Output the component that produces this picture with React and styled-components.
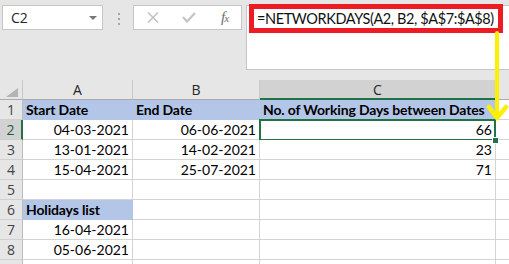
import styled, { createGlobalStyle } from 'styled-components';

const GlobalStyle = createGlobalStyle`
  html, body { margin: 0; padding: 0; background: #fff; }
  body { font-family: 'Lato', 'Liberation Sans', sans-serif; }
`;

const columns = [
  { key: 'A', width: 110 },
  { key: 'B', width: 127 },
  { key: 'C', width: 236, selected: true },
  { key: '', width: 20 },
];

const rows = [
  { n: 1, cells: [{ text: 'Start Date', bold: true, fill: true }, { text: 'End Date', bold: true, fill: true }, { text: 'No. of Working Days between Dates', bold: true, fill: true }, {}] },
  { n: 2, selected: true, cells: [{ text: '04-03-2021', right: true }, { text: '06-06-2021', right: true }, { text: '66', right: true, active: true }, {}] },
  { n: 3, cells: [{ text: '13-01-2021', right: true }, { text: '14-02-2021', right: true }, { text: '23', right: true }, {}] },
  { n: 4, cells: [{ text: '15-04-2021', right: true }, { text: '25-07-2021', right: true }, { text: '71', right: true }, {}] },
  { n: 5, cells: [{}, {}, {}, {}] },
  { n: 6, cells: [{ text: 'Holidays list', bold: true, fill: true }, {}, {}, {}] },
  { n: 7, cells: [{ text: '16-04-2021', right: true }, {}, {}, {}] },
  { n: 8, cells: [{ text: '05-06-2021', right: true }, {}, {}, {}] },
  { n: '', cells: [{}, {}, {}, {}] },
];

const App = () => {
  return (
    <Window>
      <GlobalStyle />
      <Toolbar>
        <NameBox>
          C2
          <Caret />
        </NameBox>
        <Grip>
          <Dot />
          <Dot />
          <Dot />
        </Grip>
        <ButtonsBox>
          <IconSlot>
            <svg width="12" height="11" viewBox="0 0 12 11">
              <path d="M1 0.5 L11 10.5 M11 0.5 L1 10.5" stroke="#c4c4c4" strokeWidth="1.6" fill="none" />
            </svg>
          </IconSlot>
          <IconSlot>
            <svg width="14" height="11" viewBox="0 0 14 11">
              <path d="M1 5 L5 9.5 L13 1" stroke="#c4c4c4" strokeWidth="2.2" fill="none" />
            </svg>
          </IconSlot>
          <IconSlot>
            <Fx>
              f<sub>x</sub>
            </Fx>
          </IconSlot>
        </ButtonsBox>
        <FormulaBar>
          <Highlight>
            <Formula>=NETWORKDAYS(A2, B2, $A$7:$A$8)</Formula>
          </Highlight>
        </FormulaBar>
      </Toolbar>

      <Sheet>
        <Corner />
        {columns.map((c, i) => (
          <ColHeader key={'c' + i} $selected={c.selected}>
            {c.key}
          </ColHeader>
        ))}
        {rows.map((r, ri) => [
          <RowHeader key={'h' + ri} $selected={r.selected}>
            {r.n}
          </RowHeader>,
          ...r.cells.map((cell, i) => (
            <Cell
              key={ri + '-' + i}
              $fill={cell.fill}
              $bold={cell.bold}
              $right={cell.right}
              $active={cell.active}
            >
              {cell.text}
              {cell.active && <FillHandle />}
            </Cell>
          )),
        ])}
      </Sheet>

      <Arrow width="24" height="92" viewBox="0 0 24 92">
        <path d="M11 3 L11 84" stroke="#ffef00" strokeWidth="4" strokeLinecap="round" fill="none" />
        <path d="M3 77 L11 88 L20 77" stroke="#ffef00" strokeWidth="4.5" strokeLinecap="round" strokeLinejoin="round" fill="none" />
      </Arrow>
    </Window>
  );
};

const Window = styled.div`
  position: relative;
  width: 509px;
  height: 264px;
  overflow: hidden;
  background: #fff;
`;

const Toolbar = styled.div`
  display: flex;
  align-items: flex-start;
  height: 80px;
  padding: 5px 0 0 2px;
  box-sizing: border-box;
  background: #e6e6e6;
`;

const NameBox = styled.div`
  flex-shrink: 0;
  display: flex;
  align-items: center;
  justify-content: space-between;
  width: 101px;
  height: 25px;
  box-sizing: border-box;
  padding: 0 5px 0 8px;
  background: #fff;
  border: 1px solid #c6c6c6;
  font: 14px 'Open Sans', sans-serif;
  color: #262626;
`;

const Caret = styled.span`
  width: 0;
  height: 0;
  border-left: 4px solid transparent;
  border-right: 4px solid transparent;
  border-top: 4px solid #777;
`;

const Grip = styled.div`
  flex-shrink: 0;
  display: flex;
  flex-direction: column;
  gap: 3px;
  margin: 8px 13px 0 15px;
`;

const Dot = styled.span`
  width: 2px;
  height: 2px;
  background: #a6a6a6;
`;

const ButtonsBox = styled.div`
  flex-shrink: 0;
  display: grid;
  grid-template-columns: repeat(3, 36px);
  align-items: center;
  width: 109px;
  height: 25px;
  box-sizing: border-box;
  padding-left: 1px;
  background: #fff;
  border: 1px solid #c6c6c6;
`;

const IconSlot = styled.span`
  display: flex;
  align-items: center;
  justify-content: center;
`;

const Fx = styled.span`
  font: italic 15px 'Liberation Serif', serif;
  color: #6e6e6e;
  line-height: 1;

  sub {
    font-size: 11px;
    vertical-align: 0;
    margin-left: -1px;
  }
`;

const FormulaBar = styled.div`
  flex: 1;
  min-width: 0;
  height: 65px;
  margin-left: 4px;
  box-sizing: border-box;
  padding: 0 6px 0 2px;
  background: #fff;
  border: 1px solid #c6c6c6;
  border-right: none;
`;

const Highlight = styled.div`
  display: flex;
  align-items: center;
  height: 29px;
  margin-top: -2px;
  box-sizing: border-box;
  padding-left: 3px;
  border: 5px solid #ed1c24;
  overflow: hidden;
`;

const Formula = styled.span`
  font: 14.5px 'Lato', sans-serif;
  letter-spacing: -0.4px;
  color: #111;
  white-space: nowrap;
`;

const Sheet = styled.div`
  display: grid;
  grid-template-columns: 23px ${columns.map((c) => c.width + 'px').join(' ')};
  grid-auto-rows: 20px;
`;

const Corner = styled.div`
  position: relative;
  background: #e6e6e6;
  border-right: 1px solid #c8c8c8;
  border-bottom: 1px solid #ababab;

  &::after {
    content: '';
    position: absolute;
    right: 4px;
    bottom: 2px;
    width: 12px;
    height: 9px;
    background: #b4b4b4;
    clip-path: polygon(100% 0, 100% 100%, 0 100%);
  }
`;

const ColHeader = styled.div`
  display: flex;
  align-items: center;
  justify-content: center;
  box-sizing: border-box;
  background: ${(p) => (p.$selected ? '#d2d2d2' : '#e6e6e6')};
  border-right: 1px solid #c8c8c8;
  border-bottom: ${(p) => (p.$selected ? '2px solid #217346' : '1px solid #ababab')};
  font: 14px 'Open Sans', sans-serif;
  color: #262626;
`;

const RowHeader = styled.div`
  display: flex;
  align-items: center;
  justify-content: center;
  box-sizing: border-box;
  background: ${(p) => (p.$selected ? '#d2d2d2' : '#e6e6e6')};
  border-right: ${(p) => (p.$selected ? '2px solid #217346' : '1px solid #bdbdbd')};
  border-bottom: 1px solid #d0d0d0;
  font: 14px 'Open Sans', sans-serif;
  color: ${(p) => (p.$selected ? '#1e5e3b' : '#444')};
`;

const Cell = styled.div`
  position: relative;
  display: flex;
  align-items: flex-end;
  justify-content: ${(p) => (p.$right ? 'flex-end' : 'flex-start')};
  box-sizing: border-box;
  padding: 0 3px 1px 3px;
  background: ${(p) => (p.$fill ? '#b4c6e7' : '#fff')};
  border-right: 1px solid ${(p) => (p.$fill ? '#b4c6e7' : '#d4d4d4')};
  border-bottom: 1px solid ${(p) => (p.$fill ? '#b4c6e7' : '#d4d4d4')};
  font: ${(p) => (p.$bold ? 700 : 400)} 14px 'Lato', sans-serif;
  letter-spacing: ${(p) => (p.$bold ? '-0.15px' : '0')};
  line-height: 17px;
  color: #000;
  white-space: nowrap;

  ${(p) =>
    p.$active &&
    `
    &::before {
      content: '';
      position: absolute;
      inset: -1px -1px -2px -1px;
      border: 2px solid #217346;
      pointer-events: none;
    }
  `}
`;

const FillHandle = styled.span`
  position: absolute;
  right: -4px;
  bottom: -5px;
  width: 5px;
  height: 5px;
  background: #217346;
  border: 1px solid #fff;
  z-index: 2;
`;

const Arrow = styled.svg`
  position: absolute;
  left: 486px;
  top: 30px;
`;

export default App;
